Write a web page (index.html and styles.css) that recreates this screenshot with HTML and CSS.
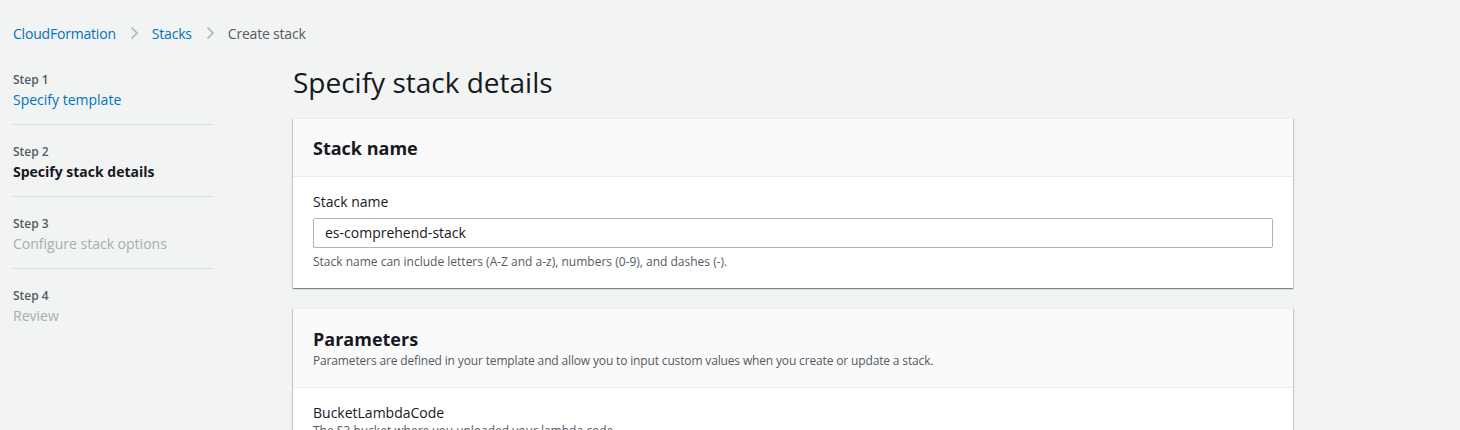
FILE: index.html
```html
<!DOCTYPE html>
<html>
<head>
<meta charset="utf-8">
<link rel="stylesheet" href="styles.css">
</head>
<body>
<nav class="crumbs">
  <a class="crumb-link">CloudFormation</a>
  <svg class="sep" width="16" height="16" viewBox="0 0 16 16"><path d="M5.5 2.5 L11 8 L5.5 13.5" fill="none" stroke="#aab7b8" stroke-width="1.6"/></svg>
  <a class="crumb-link">Stacks</a>
  <svg class="sep" width="16" height="16" viewBox="0 0 16 16"><path d="M5.5 2.5 L11 8 L5.5 13.5" fill="none" stroke="#aab7b8" stroke-width="1.6"/></svg>
  <span class="crumb-current">Create stack</span>
</nav>
<div class="layout">
  <ol class="steps">
    <li class="step">
      <span class="step-num">Step 1</span>
      <a class="step-title link">Specify template</a>
    </li>
    <li class="step">
      <span class="step-num">Step 2</span>
      <span class="step-title active">Specify stack details</span>
    </li>
    <li class="step">
      <span class="step-num">Step 3</span>
      <span class="step-title disabled">Configure stack options</span>
    </li>
    <li class="step last">
      <span class="step-num">Step 4</span>
      <span class="step-title disabled">Review</span>
    </li>
  </ol>
  <main class="main">
    <h1 class="title">Specify stack details</h1>
    <section class="card">
      <header class="card-head">
        <h2 class="card-title">Stack name</h2>
      </header>
      <div class="card-body">
        <label class="field-label">Stack name</label>
        <div class="input">es-comprehend-stack</div>
        <p class="hint">Stack name can include letters (A-Z and a-z), numbers (0-9), and dashes (-).</p>
      </div>
    </section>
    <section class="card">
      <header class="card-head params">
        <h2 class="card-title">Parameters</h2>
        <p class="card-desc">Parameters are defined in your template and allow you to input custom values when you create or update a stack.</p>
      </header>
      <div class="card-body">
        <label class="field-label">BucketLambdaCode</label>
        <p class="field-desc">The S3 bucket where you uploaded your lambda code</p>
      </div>
    </section>
  </main>
</div>
</body>
</html>
```
FILE: styles.css
```css
* { box-sizing: border-box; }
html, body { margin: 0; padding: 0; }
body {
  background: #f2f3f3;
  font-family: "Open Sans", "Noto Sans", Arial, sans-serif;
  color: #16191f;
  font-size: 14px;
  width: 1460px;
  height: 430px;
  overflow: hidden;
}
.crumbs {
  display: flex;
  align-items: center;
  gap: 10px;
  height: 22px;
  margin: 22px 0 0 13px;
  font-size: 14px;
  letter-spacing: -0.2px;
}
.crumb-link { color: #0073bb; }
.crumb-current { color: #545b64; }
.sep { display: block; }
.layout {
  display: flex;
  margin-top: 21px;
}
.steps {
  list-style: none;
  margin: 0 0 0 13px;
  padding: 0;
  width: 200px;
  flex: none;
}
.step {
  display: flex;
  flex-direction: column;
  padding: 19px 0 14px;
  border-bottom: 1px solid #d5dbdb;
}
.step:first-child { padding-top: 7px; }
.step.last { border-bottom: none; }
.step-num {
  font-size: 12px;
  color: #545b64;
  line-height: 16px;
  font-weight: 600;
}
.step-title {
  font-size: 14px;
  line-height: 20px;
  margin-top: 2px;
}
.step-title.link { color: #0073bb; }
.step-title.active { font-weight: 700; color: #16191f; }
.step-title.disabled { color: #a3b0b1; }
.main {
  margin-left: 80px;
  width: 1000px;
  flex: none;
}
.title {
  font-size: 28px;
  font-weight: 400;
  line-height: 34px;
  margin: 0 0 19px;
  color: #16191f;
}
.card {
  background: #fff;
  border-top: 1px solid #eaeded;
  box-shadow: 0 1px 1px 0 rgba(0,28,36,0.3), 1px 1px 1px 0 rgba(0,28,36,0.15), -1px 1px 1px 0 rgba(0,28,36,0.15);
  margin-bottom: 20px;
}
.card-head {
  background: #fafafa;
  border-bottom: 1px solid #eaeded;
  padding: 16px 20px;
  height: 58px;
}
.card-head.params { height: 79px; padding-top: 17px; }
.card-title {
  font-size: 18px;
  font-weight: 700;
  line-height: 26px;
  margin: 0;
}
.card-desc {
  margin: 1px 0 0;
  font-size: 12px;
  line-height: 16px;
  color: #545b64;
  letter-spacing: -0.15px;
}
.card-body {
  padding: 15px 20px 18px;
}
.field-label {
  display: block;
  font-size: 14px;
  line-height: 20px;
  color: #16191f;
}
.input {
  margin-top: 6px;
  height: 30px;
  border: 1px solid #aab7b8;
  border-radius: 2px;
  padding: 0 11px;
  line-height: 28px;
  font-size: 14px;
  color: #16191f;
  background: #fff;
}
.hint {
  margin: 6px 0 0;
  font-size: 12px;
  line-height: 16px;
  color: #545b64;
}
.field-desc {
  margin: 0;
  font-size: 12px;
  line-height: 16px;
  color: #545b64;
}
```
